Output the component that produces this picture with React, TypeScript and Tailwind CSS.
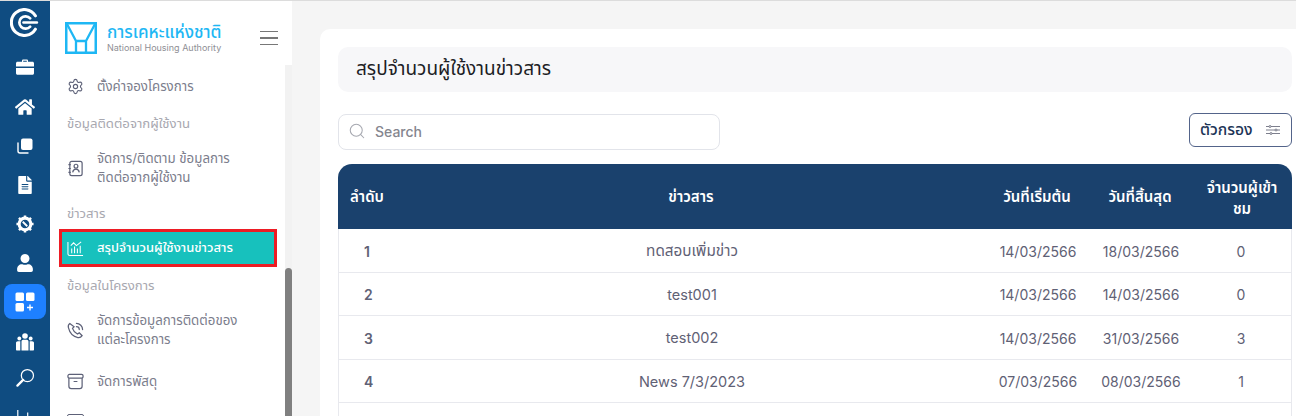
import type { ReactNode } from 'react';
import { FaHome, FaFileAlt, FaUser } from 'react-icons/fa';
import { Settings, Search } from 'lucide-react';

const FONT = "font-['Inter','Noto_Sans','Noto_Sans_Thai','Liberation_Sans',sans-serif]";
const COLS = 'grid grid-cols-[58px_590px_102px_104px_100px] items-center';

const rows = [
  { id: '1', title: 'ทดสอบเพิ่มข่าว', thai: true, start: '14/03/2566', end: '18/03/2566', count: '0' },
  { id: '2', title: 'test001', thai: false, start: '14/03/2566', end: '14/03/2566', count: '0' },
  { id: '3', title: 'test002', thai: false, start: '14/03/2566', end: '31/03/2566', count: '3' },
  { id: '4', title: 'News 7/3/2023', thai: false, start: '07/03/2566', end: '08/03/2566', count: '1' },
];

function RailIcon({ children, className }: { children: ReactNode; className: string }) {
  return <div className={`flex shrink-0 justify-center items-center text-white h-[24px] ${className}`}>{children}</div>;
}

function Rail() {
  return (
    <div className="w-[50px] shrink-0 h-full bg-[#0f4c81] flex flex-col items-center overflow-hidden">
      <svg viewBox="0 0 28 28" className="w-[29px] h-[29px] shrink-0 mt-[7px] ml-[-1px]" fill="none" stroke="white" strokeLinecap="round">
        <path d="M24.500 7.500A12.500 12.500 0 1 0 24.500 20.500" strokeWidth="3" />
        <path d="M19.500 10A6 6 0 1 0 19.500 18" strokeWidth="2.600" />
        <path d="M13 14H26" strokeWidth="2.400" />
      </svg>
      <RailIcon className="mt-[18px]">
        <svg viewBox="0 0 18 16" className="w-[18px] h-[16px]" fill="white">
          <path d="M6 3V1.800C6 1 6.600.5 7.300.5h3.400c.7 0 1.300.5 1.300 1.300V3h-1.200V1.700H7.200V3z" />
          <path d="M1.500 2.800h15c.8 0 1.500.7 1.500 1.500v3.200H0V4.300c0-.8.700-1.500 1.500-1.500z" />
          <path d="M0 9h18v5.300c0 .8-.7 1.500-1.500 1.500h-15C.7 15.800 0 15.100 0 14.300z" />
        </svg>
      </RailIcon>
      <RailIcon className="mt-[16px]"><FaHome size={20} /></RailIcon>
      <RailIcon className="mt-[15px]">
        <svg viewBox="0 0 16 16" className="w-[16px] h-[16px]" fill="none">
          <rect x="4" y="0.500" width="11.500" height="11.500" rx="2" fill="white" />
          <path d="M1 5v8a2 2 0 0 0 2 2h8" stroke="white" strokeWidth="1.400" strokeLinecap="round" />
        </svg>
      </RailIcon>
      <RailIcon className="mt-[15px]"><FaFileAlt size={18} /></RailIcon>
      <RailIcon className="mt-[15px]">
        <svg viewBox="0 0 20 20" className="w-[18px] h-[18px]" fill="none">
          <circle cx="10" cy="10" r="6.500" stroke="white" strokeWidth="3.400" />
          <path d="M10 .500v3M10 16.500v3M.500 10h3M16.500 10h3M3.300 3.300l2.200 2.200M14.500 14.500l2.200 2.200M16.700 3.300l-2.200 2.200M5.500 14.500l-2.200 2.200" stroke="white" strokeWidth="2.800" />
          <path d="M7.500 7.500l5 5" stroke="white" strokeWidth="2" />
        </svg>
      </RailIcon>
      <RailIcon className="mt-[15px]"><FaUser size={18} /></RailIcon>
      <div className="mt-[9px] w-[42px] h-[35px] shrink-0 rounded-[8px] bg-[#1e80ff] flex items-center justify-center">
        <svg viewBox="0 0 20 20" className="w-[20px] h-[20px]" fill="white">
          <rect x="0.500" y="0.500" width="8.500" height="8.500" rx="1.500" />
          <rect x="11" y="0.500" width="8.500" height="8.500" rx="1.500" />
          <rect x="0.500" y="11" width="8.500" height="8.500" rx="1.500" />
          <path d="M14.300 12.500h1.400v2.300H18v1.400h-2.300v2.300h-1.400v-2.300H12v-1.400h2.300z" />
        </svg>
      </div>
      <RailIcon className="mt-[11px]">
        <svg viewBox="0 0 18 18" className="w-[18px] h-[18px]" fill="white">
          <circle cx="9" cy="3" r="2.800" />
          <circle cx="3.300" cy="5.500" r="1.900" />
          <circle cx="14.700" cy="5.500" r="1.900" />
          <path d="M5.500 8.500c0-1 .8-1.700 1.700-1.700h3.600c.9 0 1.700.7 1.700 1.700V17.500h-7z" />
          <path d="M0 10c0-1 .8-1.800 1.800-1.800h2.500V17.500H1c-.6 0-1-.4-1-1z" />
          <path d="M18 10c0-1-.8-1.800-1.800-1.800h-2.500V17.500H17c.6 0 1-.4 1-1z" />
        </svg>
      </RailIcon>
      <RailIcon className="mt-[11px]">
        <svg viewBox="0 0 20 20" className="w-[19px] h-[19px]" fill="none" stroke="white">
          <circle cx="12" cy="8" r="6.400" strokeWidth="1.300" />
          <path d="M7.500 12.500L1.500 18.500" strokeWidth="2.400" strokeLinecap="round" />
        </svg>
      </RailIcon>
      <RailIcon className="mt-[17px]">
        <svg viewBox="0 0 20 20" className="w-[18px] h-[18px]" fill="none" stroke="white" strokeWidth="1.300">
          <path d="M2 1v17h17M8 8v8M13 4v12" />
        </svg>
      </RailIcon>
    </div>
  );
}

function NhaLogo() {
  return (
    <svg viewBox="0 0 32 32" className="w-[32px] h-[32px] shrink-0" fill="none" stroke="#1eb7f4" strokeWidth="2">
      <rect x="1.250" y="1.250" width="29.500" height="29.500" strokeWidth="2.500" />
      <path d="M2 2L11 19V30M30 2L21 19V30M11 19H21" strokeWidth="2.300" />
    </svg>
  );
}

function GroupLabel({ children, className }: { children: ReactNode; className: string }) {
  return <div className={`pl-[17px] text-[13.200px] leading-[18px] text-[#a8a8b0] ${className}`}>{children}</div>;
}

function NavItem({ icon, children, className }: { icon: ReactNode; children: ReactNode; className: string }) {
  return (
    <div className={`flex items-center pl-[17px] ${className}`}>
      <div className="w-[30px] shrink-0 text-[#5d6178]">{icon}</div>
      <div className="text-[13.300px] leading-[19px] text-[#7b7d8c]">{children}</div>
    </div>
  );
}

function Sidebar() {
  return (
    <div className="w-[242px] shrink-0 h-full flex flex-col bg-white overflow-hidden">
      <div className="h-[64px] shrink-0 flex items-center pl-[15px] pr-[14px] pt-[10px]">
        <NhaLogo />
        <div className="ml-[10px] flex-1">
          <div className="text-[17px] leading-[18px] font-medium text-[#1eb7f4]">การเคหะแห่งชาติ</div>
          <div className="text-[9px] leading-[12px] mt-[1px] text-[#8f8f95]">National Housing Authority</div>
        </div>
        <div className="flex flex-col gap-[5px] w-[18px]">
          <div className="h-[1.500px] bg-[#777]" />
          <div className="h-[1.500px] bg-[#777]" />
          <div className="h-[1.500px] bg-[#777]" />
        </div>
      </div>
      <div className="flex-1 flex min-h-0">
        <div className="flex-1 min-w-0">
          <NavItem className="mt-[11px] h-[20px]" icon={<Settings size={17} strokeWidth={1.600} />}>ตั้งค่าจองโครงการ</NavItem>
          <GroupLabel className="mt-[18px]">ข้อมูลติดต่อจากผู้ใช้งาน</GroupLabel>
          <NavItem
            className="mt-[17px]"
            icon={
              <svg viewBox="0 0 18 18" className="w-[17px] h-[17px]" fill="none" stroke="currentColor" strokeWidth="1.300">
                <rect x="3" y="1.500" width="13" height="15" rx="2" />
                <circle cx="9.500" cy="6.500" r="2" />
                <path d="M6 13c.4-2.400 1.600-3.400 3.500-3.400s3.100 1 3.500 3.400M1.500 5h2.500M1.500 9h2.500M1.500 13h2.500" />
              </svg>
            }
          >
            จัดการ/ติดตาม ข้อมูลการ<br />ติดต่อจากผู้ใช้งาน
          </NavItem>
          <GroupLabel className="mt-[17px]">ข่าวสาร</GroupLabel>
          <div className="ml-[9px] w-[218px] mt-[7px] h-[38px] bg-[#17c1bd] border-[3px] border-[#ed1c24] flex items-center pl-[5px] text-white">
            <svg viewBox="0 0 18 18" className="w-[17px] h-[17px] shrink-0" fill="none" stroke="white" strokeWidth="1.100">
              <path d="M1 2v12.500a2 2 0 0 0 2 2h14M5 14V9M8 14V7M11 14V9M14 14V6M4 6l3-3 3 3 5-4" />
            </svg>
            <span className="ml-[13px] text-[13px] font-medium">สรุปจำนวนผู้ใช้งานข่าวสาร</span>
          </div>
          <GroupLabel className="mt-[9px]">ข้อมูลในโครงการ</GroupLabel>
          <NavItem
            className="mt-[17px]"
            icon={
              <svg viewBox="0 0 18 18" className="w-[17px] h-[17px]" fill="none" stroke="currentColor" strokeWidth="1.300" strokeLinecap="round">
                <path d="M3 1.500C1.500 2.500 1 4 1.500 6c1.200 5 5 9.500 10 10.500 2 .4 3.500-.5 4.500-2l-3-3-2 1.200C8.500 11.500 6.500 9 5.800 6.800L7.500 5z" />
                <path d="M10 1.500a6.500 6.500 0 0 1 6.500 6.500M10 5a3 3 0 0 1 3 3" />
              </svg>
            }
          >
            จัดการข้อมูลการติดต่อของ<br />แต่ละโครงการ
          </NavItem>
          <NavItem
            className="mt-[22px] h-[20px]"
            icon={
              <svg viewBox="0 0 18 18" className="w-[17px] h-[17px]" fill="none" stroke="currentColor" strokeWidth="1.300">
                <rect x="1" y="1.500" width="16" height="4" rx="1.500" />
                <path d="M2 5.500V14a2.500 2.500 0 0 0 2.500 2.500h9A2.500 2.500 0 0 0 16 14V5.500M7 9h4" />
              </svg>
            }
          >
            จัดการพัสดุ
          </NavItem>
          <div className="mt-[23px] ml-[17px] w-[17px] h-[10px] rounded-[2px] border-[1.300px] border-[#5d6178]" />
        </div>
        <div className="w-[7px] shrink-0 bg-[#f2f2f2] flex flex-col justify-end">
          <div className="h-[148px] bg-[#808080] rounded-t-[4px]" />
        </div>
      </div>
    </div>
  );
}

function NewsTable() {
  return (
    <div className="mt-[14px] w-[954px]">
      <div className={`h-[65px] ${COLS} rounded-t-[14px] bg-[#1a416d] text-white text-[15px] font-semibold pt-[2px]`}>
        <div className="pl-[12px]">ลำดับ</div>
        <div className="text-center">ข่าวสาร</div>
        <div className="text-center">วันที่เริ่มต้น</div>
        <div className="text-center">วันที่สิ้นสุด</div>
        <div className="text-center leading-[21px] px-[8px]">จำนวนผู้เข้าชม</div>
      </div>
      {rows.map((row) => (
        <div key={row.id} className={`h-[43.500px] ${COLS} border-b border-x border-[#e8e9ee] text-[14px] text-[#5f6175] pt-[2px]`}>
          <div className="pl-[25px] font-semibold">{row.id}</div>
          <div className={`text-center ${row.thai ? 'text-[15.300px]' : 'text-[14.500px]'}`}>{row.title}</div>
          <div className="text-center">{row.start}</div>
          <div className="text-center">{row.end}</div>
          <div className="text-center pr-[4px]">{row.count}</div>
        </div>
      ))}
      <div className="h-[43.500px] border-x border-[#e8e9ee]" />
    </div>
  );
}

export default function App() {
  return (
    <div className={`w-[1296px] h-[416px] overflow-hidden flex flex-col bg-[#f5f5f5] ${FONT}`}>
      <div className="h-[1px] shrink-0 bg-[#dcdcdc]" />
      <div className="flex-1 min-h-0 flex">
        <Rail />
        <Sidebar />
        <div className="flex-1 min-w-0 pl-[28px] pt-[28px] overflow-hidden">
          <div className="h-[420px] bg-white rounded-tl-[10px] pl-[18px] pt-[18px]">
            <div className="w-[954px] h-[45px] rounded-[10px] bg-[#f7f7f9] flex items-center pl-[18px] text-[19px] text-[#1d1d25]">
              สรุปจำนวนผู้ใช้งานข่าวสาร
            </div>
            <div className="mt-[21px] w-[954px] flex items-start justify-between">
              <div className="mt-[1px] w-[382px] h-[36px] rounded-[8px] border border-[#e2e4ea] flex items-center pl-[9px] pb-[2px]">
                <Search size={18} strokeWidth={1.400} className="text-[#a6a8b0]" />
                <span className="ml-[9px] text-[14px] font-medium text-[#85868f]">Search</span>
              </div>
              <div className="w-[103px] h-[34px] rounded-[6px] border border-[#53648a] flex items-center pl-[10px]">
                <span className="text-[15.600px] font-medium text-[#1d3557]">ตัวกรอง</span>
                <svg viewBox="0 0 14 10" className="ml-auto mr-[11px] w-[14px] h-[10px]" fill="none" stroke="#6e7180" strokeWidth="0.900">
                  <path d="M0 1.500h14M0 5h14M0 8.500h14" />
                  <circle cx="4" cy="1.500" r="1" fill="white" />
                  <circle cx="10" cy="5" r="1" fill="white" />
                  <circle cx="5" cy="8.500" r="1" fill="white" />
                </svg>
              </div>
            </div>
            <NewsTable />
          </div>
        </div>
      </div>
    </div>
  );
}
